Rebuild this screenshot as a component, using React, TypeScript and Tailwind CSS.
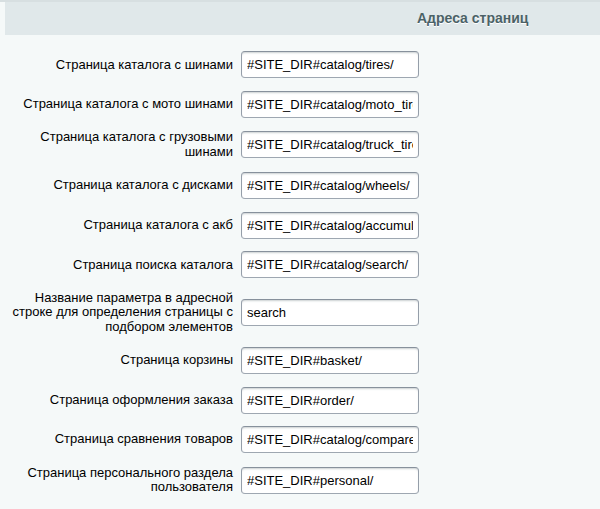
import React from 'react';

interface Field {
  label: string;
  value: string;
}

const fields: Field[] = [
  { label: 'Страница каталога с шинами', value: '#SITE_DIR#catalog/tires/' },
  { label: 'Страница каталога с мото шинами', value: '#SITE_DIR#catalog/moto_tires/' },
  { label: 'Страница каталога с грузовыми шинами', value: '#SITE_DIR#catalog/truck_tires/' },
  { label: 'Страница каталога с дисками', value: '#SITE_DIR#catalog/wheels/' },
  { label: 'Страница каталога с акб', value: '#SITE_DIR#catalog/accumulators/' },
  { label: 'Страница поиска каталога', value: '#SITE_DIR#catalog/search/' },
  {
    label: 'Название параметра в адресной строке для определения страницы с подбором элементов',
    value: 'search',
  },
  { label: 'Страница корзины', value: '#SITE_DIR#basket/' },
  { label: 'Страница оформления заказа', value: '#SITE_DIR#order/' },
  { label: 'Страница сравнения товаров', value: '#SITE_DIR#catalog/compare/' },
  { label: 'Страница персонального раздела пользователя', value: '#SITE_DIR#personal/' },
];

const FieldRow: React.FC<{ field: Field }> = ({ field }) => (
  <div className="flex items-center py-[6.3px]">
    <div className="w-[241px] shrink-0 pr-2 text-right text-[13px] leading-[14.5px] text-black">
      {field.label}
    </div>
    <input
      type="text"
      readOnly
      value={field.value}
      className="w-[178px] h-[27px] px-[5px] text-[13px] text-black bg-white rounded-[4px] border border-solid border-t-[#87919c] border-x-[#959ea9] border-b-[#9ea7b1] shadow-[inset_0_2px_2px_-1px_rgba(180,188,191,0.7)] outline-none"
      style={{ fontFamily: '"Liberation Sans", Arial, sans-serif' }}
    />
  </div>
);

export default function App() {
  return (
    <div
      className="w-full h-[509px] bg-[#f5f9f9] border-t-2 border-[#d7dfe1] overflow-hidden"
      style={{ fontFamily: '"Liberation Sans", Arial, sans-serif' }}
    >
      {/* Section heading */}
      <div className="ml-[5px] h-[33px] bg-[#e0e8ea] flex items-center pl-[412px]">
        <span className="text-[14px] font-bold text-[#4b6267] [text-shadow:0_1px_#fff]">
          Адреса страниц
        </span>
      </div>

      <div className="mt-[10px]">
        {fields.map((f) => (
          <FieldRow key={f.label} field={f} />
        ))}
      </div>
    </div>
  );
}
